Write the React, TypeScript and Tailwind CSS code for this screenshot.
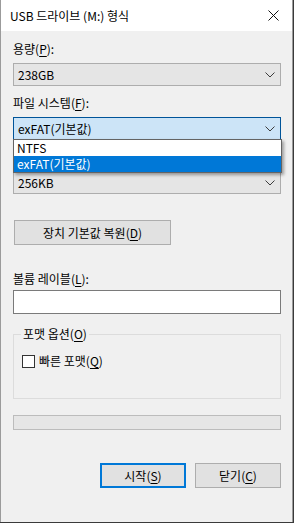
import React from "react";

const font = { fontFamily: '"Noto Sans CJK KR", "Noto Sans", sans-serif' };

function Chevron() {
  return (
    <svg width="10" height="6" viewBox="0 0 10 6" className="absolute right-[5px] top-[8px]">
      <path d="M0.5 0.5 L5 5 L9.5 0.5" fill="none" stroke="#3c3c3c" strokeWidth="1" />
    </svg>
  );
}

function Combo({ value, focused }: { value: string; focused?: boolean }) {
  return (
    <div
      className={
        "relative h-[23px] w-[268px] border pl-[4px] text-[12px] leading-[21px] text-black " +
        (focused ? "border-[#005499] bg-[#cce4f7]" : "border-[#adadad] bg-[#e5e5e5]")
      }
    >
      {value}
      <Chevron />
    </div>
  );
}

function Label({ text, k, className }: { text: string; k: string; className?: string }) {
  return (
    <div className={"h-[16px] text-[12px] leading-[16px] text-black " + (className ?? "")}>
      {text}(<u className="underline-offset-2">{k}</u>):
    </div>
  );
}

export default function App() {
  return (
    <div className="w-[294px] h-[523px] bg-[#3a3a3a]" style={font}>
      <div className="relative w-[293px] h-[522px] border-l border-r border-[#9b9b9b] bg-[#f0f0f0] flex flex-col">
        {/* title bar */}
        <div className="h-[31px] bg-white flex items-center justify-between pl-[9px] pr-[13px]">
          <span className="text-[12px] text-black">USB 드라이브 (M:) 형식</span>
          <svg width="11" height="11" viewBox="0 0 11 11">
            <path d="M0.5 0.5 L10.5 10.5 M10.5 0.5 L0.5 10.5" stroke="#111" strokeWidth="1" />
          </svg>
        </div>

        <div className="flex flex-col pl-[12px]">
          <Label text="용량" k="P" className="mt-[10px]" />
          <div className="mt-[6px]">
            <Combo value="238GB" />
          </div>
          <Label text="파일 시스템" k="F" className="mt-[9px]" />
          <div className="mt-[6px]">
            <Combo value="exFAT(기본값)" focused />
          </div>
          <Label text="할당 단위 크기" k="A" className="mt-[8px] invisible" />
          <div className="mt-[7px]">
            <Combo value="256KB" />
          </div>

          <button className="mt-[26px] ml-[1px] h-[25px] w-[157px] border border-[#adadad] bg-[#e1e1e1] text-[12px] text-black leading-[23px]">
            장치 기본값 복원(<u className="underline-offset-2">D</u>)
          </button>

          <Label text="볼륨 레이블" k="L" className="mt-[26px]" />
          <div className="mt-[3px] h-[24px] w-[268px] border border-[#7a7a7a] bg-white" />

          {/* group box */}
          <div className="relative mt-[20px] h-[65px] w-[268px] border border-[#dcdcdc]">
            <span className="absolute -top-[9px] left-[7px] bg-[#f0f0f0] px-[2px] text-[12px] leading-[16px] text-black">
              포맷 옵션(<u className="underline-offset-2">O</u>)
            </span>
            <div className="mt-[18px] ml-[8px] flex items-center gap-[4px]">
              <div className="h-[13px] w-[13px] border border-[#333] bg-white" />
              <span className="text-[12px] leading-[16px] text-black">
                빠른 포맷(<u className="underline-offset-2">Q</u>)
              </span>
            </div>
          </div>

          <div className="mt-[16px] h-[15px] w-[268px] border border-[#bcbcbc] bg-[#e6e6e6]" />

          <div className="mt-[33px] flex gap-[9px] pl-[87px]">
            <button className="h-[25px] w-[86px] border-2 border-[#0078d7] bg-[#e1e1e1] text-[12px] text-black leading-[21px]">
              시작(<u className="underline-offset-2">S</u>)
            </button>
            <button className="h-[25px] w-[86px] border border-[#adadad] bg-[#e1e1e1] text-[12px] text-black leading-[23px]">
              닫기(<u className="underline-offset-2">C</u>)
            </button>
          </div>
        </div>

        {/* open dropdown list */}
        <div className="absolute left-[12px] top-[139px] w-[269px] border border-[#646464] bg-white shadow-[2px_2px_3px_rgba(0,0,0,0.35)] text-[12px]">
          <div className="h-[16px] pl-[3px] leading-[16px] text-black">NTFS</div>
          <div className="h-[16px] pl-[3px] leading-[16px] bg-[#0078d7] text-white">exFAT(기본값)</div>
        </div>
      </div>
    </div>
  );
}
